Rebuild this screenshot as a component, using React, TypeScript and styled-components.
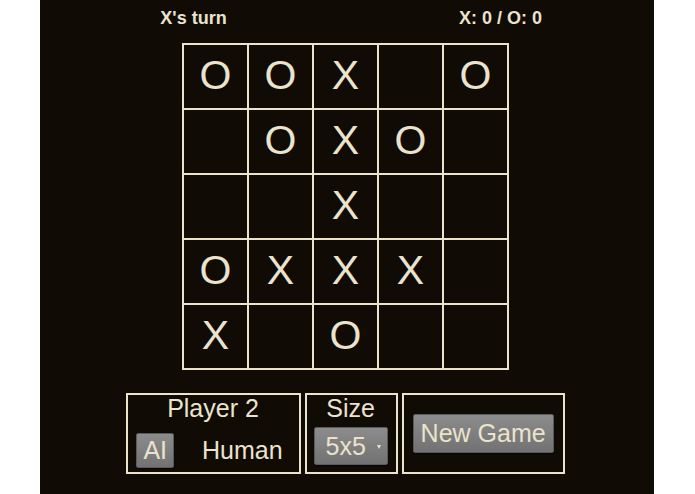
import React, { useState } from "react";
import styled, { createGlobalStyle } from "styled-components";

const cream = "#ebe3cc";
const dark = "#100b04";

const GlobalStyle = createGlobalStyle`
	html, body {
		margin: 0;
		padding: 0;
		background: #ffffff;
	}
	body {
		font-family: "Liberation Sans", Arial, sans-serif;
	}
`;

type Mark = "X" | "O" | "";

const initialBoard: Mark[][] = [
	["O", "O", "X", "", "O"],
	["", "O", "X", "O", ""],
	["", "", "X", "", ""],
	["O", "X", "X", "X", ""],
	["X", "", "O", "", ""],
];

/* exported component */
const App = () => {
	const [board] = useState<Mark[][]>(initialBoard);
	const [opponent, setOpponent] = useState<"ai" | "human">("ai");
	const [size, setSize] = useState("5");

	return (
		<>
			<GlobalStyle />
			<Panel>
				<Header>
					<Status>X's turn</Status>
					<Status>X: 0 / O: 0</Status>
				</Header>

				<Board $size={5}>
					{board.flat().map((mark, i) => (
						<Cell key={i}>{mark}</Cell>
					))}
				</Board>

				<Controls>
					<Group $pad="0 9px 0 8px">
						<GroupTitle>Player 2</GroupTitle>
						<ToggleRow>
							<Toggle
								$active={opponent === "ai"}
								onClick={() => setOpponent("ai")}
							>
								AI
							</Toggle>
							<Toggle
								$active={opponent === "human"}
								onClick={() => setOpponent("human")}
							>
								Human
							</Toggle>
						</ToggleRow>
					</Group>

					<Group $pad="0 8px 0 7px">
						<GroupTitle>Size</GroupTitle>
						<SelectWrap>
							<SizeSelect value={size} onChange={(e) => setSize(e.target.value)}>
								<option value="3">3x3</option>
								<option value="4">4x4</option>
								<option value="5">5x5</option>
							</SizeSelect>
							<Caret />
						</SelectWrap>
					</Group>

					<Group $center $pad="0 9px">
						<GameButton>New Game</GameButton>
					</Group>
				</Controls>
			</Panel>
		</>
	);
};

export default App;

// Styled Components
const Panel = styled.div`
	width: 614px;
	min-height: 494px;
	margin-left: 40px;
	background: ${dark};
	color: ${cream};
	display: flex;
	flex-direction: column;
	align-items: center;
`;

const Header = styled.div`
	display: flex;
	width: 100%;
	height: 36px;
`;

const Status = styled.div`
	flex: 1;
	text-align: center;
	font-size: 18px;
	font-weight: bold;
	line-height: 36px;
`;

const Board = styled.div<{ $size: number }>`
	margin: 7px 3px 0 0;
	display: grid;
	grid-template-columns: repeat(${(p) => p.$size}, 63px);
	grid-auto-rows: 63px;
	gap: 2px;
	padding: 2px;
	background: ${cream};
`;

const Cell = styled.div`
	background: ${dark};
	display: flex;
	align-items: center;
	justify-content: center;
	font-size: 41px;
	line-height: 1;
	color: ${cream};
	padding-bottom: 2px;
	box-sizing: border-box;
`;

const Controls = styled.div`
	margin: 23px 3px 0 0;
	display: flex;
	gap: 4px;
`;

const Group = styled.div<{ $center?: boolean; $pad: string }>`
	height: 81px;
	box-sizing: border-box;
	border: 2px solid ${cream};
	padding: ${(p) => p.$pad};
	display: flex;
	flex-direction: column;
	align-items: center;
	justify-content: ${(p) => (p.$center ? "center" : "flex-start")};
`;

const GroupTitle = styled.div`
	font-size: 25px;
	line-height: 27px;
`;

const ToggleRow = styled.div`
	margin-top: 11px;
	display: flex;
	gap: 21px;
`;

const Toggle = styled.button<{ $active?: boolean }>`
	height: 35px;
	padding: 0 6px;
	font-family: inherit;
	font-size: 25px;
	color: ${cream};
	border: 1px solid ${(p) => (p.$active ? "#5a5a5a" : "transparent")};
	border-radius: 2px;
	background: ${(p) =>
		p.$active ? "linear-gradient(#8c8c8c, #727272)" : "transparent"};
	box-shadow: ${(p) => (p.$active ? "0 1px 1px rgba(0,0,0,0.5)" : "none")};
	cursor: pointer;
`;

const SelectWrap = styled.div`
	position: relative;
	margin-top: 5px;
`;

const SizeSelect = styled.select`
	appearance: none;
	-webkit-appearance: none;
	width: 74px;
	height: 38px;
	padding: 0 0 0 11px;
	font-family: inherit;
	font-size: 25px;
	color: ${cream};
	border: 1px solid #5a5a5a;
	border-radius: 2px;
	background: linear-gradient(#8c8c8c, #727272);
	box-shadow: 0 1px 1px rgba(0, 0, 0, 0.5);
	outline: none;
`;

const Caret = styled.span`
	position: absolute;
	right: 7px;
	top: 18px;
	width: 0;
	height: 0;
	border-left: 2.5px solid transparent;
	border-right: 2.5px solid transparent;
	border-top: 4px solid ${cream};
	pointer-events: none;
`;

const GameButton = styled.button`
	width: 141px;
	height: 39px;
	padding: 0;
	font-family: inherit;
	font-size: 25px;
	color: ${cream};
	border: 1px solid #5a5a5a;
	border-radius: 2px;
	background: linear-gradient(#8c8c8c, #727272);
	box-shadow: 0 1px 1px rgba(0, 0, 0, 0.5);
	cursor: pointer;
`;
